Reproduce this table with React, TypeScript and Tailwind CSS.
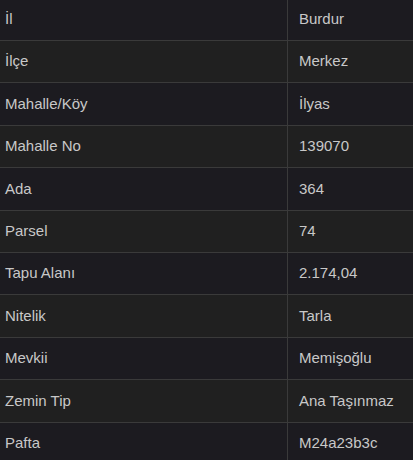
const rows: [string, string][] = [
  ['İl', 'Burdur'],
  ['İlçe', 'Merkez'],
  ['Mahalle/Köy', 'İlyas'],
  ['Mahalle No', '139070'],
  ['Ada', '364'],
  ['Parsel', '74'],
  ['Tapu Alanı', '2.174,04'],
  ['Nitelik', 'Tarla'],
  ['Mevkii', 'Memişoğlu'],
  ['Zemin Tip', 'Ana Taşınmaz'],
  ['Pafta', 'M24a23b3c'],
];

export default function App() {
  return (
    <div className="h-[460px] w-[413px] overflow-hidden bg-[#202020] font-['Liberation_Sans',Arial,sans-serif] text-[15px] text-[#c8c8c8]">
      <div className="mt-[-1.4px] flex flex-col">
        {rows.map(([label, value], i) => (
          <div
            key={label}
            className={`flex h-[42.4px] shrink-0 border-b border-[#3a3a3a] ${i % 2 === 0 ? 'bg-[#1c1b20]' : 'bg-[#202020]'}`}
          >
            <div className="flex w-[287px] shrink-0 items-center pl-[5px]">{label}</div>
            <div className="flex flex-1 items-center border-l border-[#3a3a3a] pl-[11px]">{value}</div>
          </div>
        ))}
      </div>
    </div>
  );
}
